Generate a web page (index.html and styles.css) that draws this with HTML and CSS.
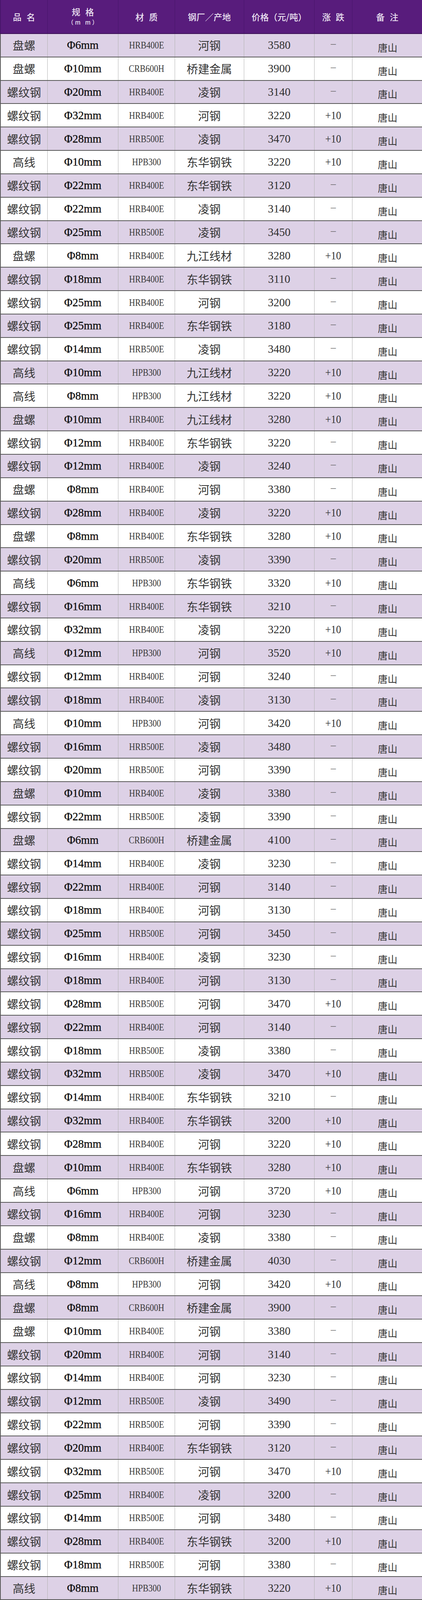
FILE: index.html
```html
<!DOCTYPE html>
<html lang="zh-CN">
<head>
<meta charset="utf-8">
<meta name="viewport" content="width=1080">
<title>钢材价格表</title>
<link rel="stylesheet" href="styles.css">
</head>
<body>
<div class="sheet">
  <div class="row head">
    <div class="cell"><span class="hl">品 名</span></div>
    <div class="cell stack"><span class="hl">规 格</span><span class="unit">（m m）</span></div>
    <div class="cell"><span class="hl">材 质</span></div>
    <div class="cell"><span class="hl tight">钢厂／产地</span></div>
    <div class="cell"><span class="hl tight">价格（元/吨）</span></div>
    <div class="cell"><span class="hl">涨 跌</span></div>
    <div class="cell"><span class="hl">备 注</span></div>
  </div>
  <div class="row"><div class="cell name">盘螺</div><div class="cell spec">Φ6mm</div><div class="cell grade"><span>HRB400E</span></div><div class="cell mill">河钢</div><div class="cell price">3580</div><div class="cell chg"><span class="flat">–</span></div><div class="cell note">唐山</div></div>
  <div class="row"><div class="cell name">盘螺</div><div class="cell spec">Φ10mm</div><div class="cell grade"><span>CRB600H</span></div><div class="cell mill">桥建金属</div><div class="cell price">3900</div><div class="cell chg"><span class="flat">–</span></div><div class="cell note">唐山</div></div>
  <div class="row"><div class="cell name">螺纹钢</div><div class="cell spec">Φ20mm</div><div class="cell grade"><span>HRB400E</span></div><div class="cell mill">凌钢</div><div class="cell price">3140</div><div class="cell chg"><span class="flat">–</span></div><div class="cell note">唐山</div></div>
  <div class="row"><div class="cell name">螺纹钢</div><div class="cell spec">Φ32mm</div><div class="cell grade"><span>HRB400E</span></div><div class="cell mill">河钢</div><div class="cell price">3220</div><div class="cell chg"><span class="up">+10</span></div><div class="cell note">唐山</div></div>
  <div class="row"><div class="cell name">螺纹钢</div><div class="cell spec">Φ28mm</div><div class="cell grade"><span>HRB500E</span></div><div class="cell mill">凌钢</div><div class="cell price">3470</div><div class="cell chg"><span class="up">+10</span></div><div class="cell note">唐山</div></div>
  <div class="row"><div class="cell name">高线</div><div class="cell spec">Φ10mm</div><div class="cell grade"><span>HPB300</span></div><div class="cell mill">东华钢铁</div><div class="cell price">3220</div><div class="cell chg"><span class="up">+10</span></div><div class="cell note">唐山</div></div>
  <div class="row"><div class="cell name">螺纹钢</div><div class="cell spec">Φ22mm</div><div class="cell grade"><span>HRB400E</span></div><div class="cell mill">东华钢铁</div><div class="cell price">3120</div><div class="cell chg"><span class="flat">–</span></div><div class="cell note">唐山</div></div>
  <div class="row"><div class="cell name">螺纹钢</div><div class="cell spec">Φ22mm</div><div class="cell grade"><span>HRB400E</span></div><div class="cell mill">凌钢</div><div class="cell price">3140</div><div class="cell chg"><span class="flat">–</span></div><div class="cell note">唐山</div></div>
  <div class="row"><div class="cell name">螺纹钢</div><div class="cell spec">Φ25mm</div><div class="cell grade"><span>HRB500E</span></div><div class="cell mill">凌钢</div><div class="cell price">3450</div><div class="cell chg"><span class="flat">–</span></div><div class="cell note">唐山</div></div>
  <div class="row"><div class="cell name">盘螺</div><div class="cell spec">Φ8mm</div><div class="cell grade"><span>HRB400E</span></div><div class="cell mill">九江线材</div><div class="cell price">3280</div><div class="cell chg"><span class="up">+10</span></div><div class="cell note">唐山</div></div>
  <div class="row"><div class="cell name">螺纹钢</div><div class="cell spec">Φ18mm</div><div class="cell grade"><span>HRB400E</span></div><div class="cell mill">东华钢铁</div><div class="cell price">3110</div><div class="cell chg"><span class="flat">–</span></div><div class="cell note">唐山</div></div>
  <div class="row"><div class="cell name">螺纹钢</div><div class="cell spec">Φ25mm</div><div class="cell grade"><span>HRB400E</span></div><div class="cell mill">河钢</div><div class="cell price">3200</div><div class="cell chg"><span class="flat">–</span></div><div class="cell note">唐山</div></div>
  <div class="row"><div class="cell name">螺纹钢</div><div class="cell spec">Φ25mm</div><div class="cell grade"><span>HRB400E</span></div><div class="cell mill">东华钢铁</div><div class="cell price">3180</div><div class="cell chg"><span class="flat">–</span></div><div class="cell note">唐山</div></div>
  <div class="row"><div class="cell name">螺纹钢</div><div class="cell spec">Φ14mm</div><div class="cell grade"><span>HRB500E</span></div><div class="cell mill">凌钢</div><div class="cell price">3480</div><div class="cell chg"><span class="flat">–</span></div><div class="cell note">唐山</div></div>
  <div class="row"><div class="cell name">高线</div><div class="cell spec">Φ10mm</div><div class="cell grade"><span>HPB300</span></div><div class="cell mill">九江线材</div><div class="cell price">3220</div><div class="cell chg"><span class="up">+10</span></div><div class="cell note">唐山</div></div>
  <div class="row"><div class="cell name">高线</div><div class="cell spec">Φ8mm</div><div class="cell grade"><span>HPB300</span></div><div class="cell mill">九江线材</div><div class="cell price">3220</div><div class="cell chg"><span class="up">+10</span></div><div class="cell note">唐山</div></div>
  <div class="row"><div class="cell name">盘螺</div><div class="cell spec">Φ10mm</div><div class="cell grade"><span>HRB400E</span></div><div class="cell mill">九江线材</div><div class="cell price">3280</div><div class="cell chg"><span class="up">+10</span></div><div class="cell note">唐山</div></div>
  <div class="row"><div class="cell name">螺纹钢</div><div class="cell spec">Φ12mm</div><div class="cell grade"><span>HRB400E</span></div><div class="cell mill">东华钢铁</div><div class="cell price">3220</div><div class="cell chg"><span class="flat">–</span></div><div class="cell note">唐山</div></div>
  <div class="row"><div class="cell name">螺纹钢</div><div class="cell spec">Φ12mm</div><div class="cell grade"><span>HRB400E</span></div><div class="cell mill">凌钢</div><div class="cell price">3240</div><div class="cell chg"><span class="flat">–</span></div><div class="cell note">唐山</div></div>
  <div class="row"><div class="cell name">盘螺</div><div class="cell spec">Φ8mm</div><div class="cell grade"><span>HRB400E</span></div><div class="cell mill">河钢</div><div class="cell price">3380</div><div class="cell chg"><span class="flat">–</span></div><div class="cell note">唐山</div></div>
  <div class="row"><div class="cell name">螺纹钢</div><div class="cell spec">Φ28mm</div><div class="cell grade"><span>HRB400E</span></div><div class="cell mill">凌钢</div><div class="cell price">3220</div><div class="cell chg"><span class="up">+10</span></div><div class="cell note">唐山</div></div>
  <div class="row"><div class="cell name">盘螺</div><div class="cell spec">Φ8mm</div><div class="cell grade"><span>HRB400E</span></div><div class="cell mill">东华钢铁</div><div class="cell price">3280</div><div class="cell chg"><span class="up">+10</span></div><div class="cell note">唐山</div></div>
  <div class="row"><div class="cell name">螺纹钢</div><div class="cell spec">Φ20mm</div><div class="cell grade"><span>HRB500E</span></div><div class="cell mill">凌钢</div><div class="cell price">3390</div><div class="cell chg"><span class="flat">–</span></div><div class="cell note">唐山</div></div>
  <div class="row"><div class="cell name">高线</div><div class="cell spec">Φ6mm</div><div class="cell grade"><span>HPB300</span></div><div class="cell mill">东华钢铁</div><div class="cell price">3320</div><div class="cell chg"><span class="up">+10</span></div><div class="cell note">唐山</div></div>
  <div class="row"><div class="cell name">螺纹钢</div><div class="cell spec">Φ16mm</div><div class="cell grade"><span>HRB400E</span></div><div class="cell mill">东华钢铁</div><div class="cell price">3210</div><div class="cell chg"><span class="flat">–</span></div><div class="cell note">唐山</div></div>
  <div class="row"><div class="cell name">螺纹钢</div><div class="cell spec">Φ32mm</div><div class="cell grade"><span>HRB400E</span></div><div class="cell mill">凌钢</div><div class="cell price">3220</div><div class="cell chg"><span class="up">+10</span></div><div class="cell note">唐山</div></div>
  <div class="row"><div class="cell name">高线</div><div class="cell spec">Φ12mm</div><div class="cell grade"><span>HPB300</span></div><div class="cell mill">河钢</div><div class="cell price">3520</div><div class="cell chg"><span class="up">+10</span></div><div class="cell note">唐山</div></div>
  <div class="row"><div class="cell name">螺纹钢</div><div class="cell spec">Φ12mm</div><div class="cell grade"><span>HRB400E</span></div><div class="cell mill">河钢</div><div class="cell price">3240</div><div class="cell chg"><span class="flat">–</span></div><div class="cell note">唐山</div></div>
  <div class="row"><div class="cell name">螺纹钢</div><div class="cell spec">Φ18mm</div><div class="cell grade"><span>HRB400E</span></div><div class="cell mill">凌钢</div><div class="cell price">3130</div><div class="cell chg"><span class="flat">–</span></div><div class="cell note">唐山</div></div>
  <div class="row"><div class="cell name">高线</div><div class="cell spec">Φ10mm</div><div class="cell grade"><span>HPB300</span></div><div class="cell mill">河钢</div><div class="cell price">3420</div><div class="cell chg"><span class="up">+10</span></div><div class="cell note">唐山</div></div>
  <div class="row"><div class="cell name">螺纹钢</div><div class="cell spec">Φ16mm</div><div class="cell grade"><span>HRB500E</span></div><div class="cell mill">凌钢</div><div class="cell price">3480</div><div class="cell chg"><span class="flat">–</span></div><div class="cell note">唐山</div></div>
  <div class="row"><div class="cell name">螺纹钢</div><div class="cell spec">Φ20mm</div><div class="cell grade"><span>HRB500E</span></div><div class="cell mill">河钢</div><div class="cell price">3390</div><div class="cell chg"><span class="flat">–</span></div><div class="cell note">唐山</div></div>
  <div class="row"><div class="cell name">盘螺</div><div class="cell spec">Φ10mm</div><div class="cell grade"><span>HRB400E</span></div><div class="cell mill">凌钢</div><div class="cell price">3380</div><div class="cell chg"><span class="flat">–</span></div><div class="cell note">唐山</div></div>
  <div class="row"><div class="cell name">螺纹钢</div><div class="cell spec">Φ22mm</div><div class="cell grade"><span>HRB500E</span></div><div class="cell mill">凌钢</div><div class="cell price">3390</div><div class="cell chg"><span class="flat">–</span></div><div class="cell note">唐山</div></div>
  <div class="row"><div class="cell name">盘螺</div><div class="cell spec">Φ6mm</div><div class="cell grade"><span>CRB600H</span></div><div class="cell mill">桥建金属</div><div class="cell price">4100</div><div class="cell chg"><span class="flat">–</span></div><div class="cell note">唐山</div></div>
  <div class="row"><div class="cell name">螺纹钢</div><div class="cell spec">Φ14mm</div><div class="cell grade"><span>HRB400E</span></div><div class="cell mill">凌钢</div><div class="cell price">3230</div><div class="cell chg"><span class="flat">–</span></div><div class="cell note">唐山</div></div>
  <div class="row"><div class="cell name">螺纹钢</div><div class="cell spec">Φ22mm</div><div class="cell grade"><span>HRB400E</span></div><div class="cell mill">河钢</div><div class="cell price">3140</div><div class="cell chg"><span class="flat">–</span></div><div class="cell note">唐山</div></div>
  <div class="row"><div class="cell name">螺纹钢</div><div class="cell spec">Φ18mm</div><div class="cell grade"><span>HRB400E</span></div><div class="cell mill">河钢</div><div class="cell price">3130</div><div class="cell chg"><span class="flat">–</span></div><div class="cell note">唐山</div></div>
  <div class="row"><div class="cell name">螺纹钢</div><div class="cell spec">Φ25mm</div><div class="cell grade"><span>HRB500E</span></div><div class="cell mill">河钢</div><div class="cell price">3450</div><div class="cell chg"><span class="flat">–</span></div><div class="cell note">唐山</div></div>
  <div class="row"><div class="cell name">螺纹钢</div><div class="cell spec">Φ16mm</div><div class="cell grade"><span>HRB400E</span></div><div class="cell mill">凌钢</div><div class="cell price">3230</div><div class="cell chg"><span class="flat">–</span></div><div class="cell note">唐山</div></div>
  <div class="row"><div class="cell name">螺纹钢</div><div class="cell spec">Φ18mm</div><div class="cell grade"><span>HRB400E</span></div><div class="cell mill">河钢</div><div class="cell price">3130</div><div class="cell chg"><span class="flat">–</span></div><div class="cell note">唐山</div></div>
  <div class="row"><div class="cell name">螺纹钢</div><div class="cell spec">Φ28mm</div><div class="cell grade"><span>HRB500E</span></div><div class="cell mill">河钢</div><div class="cell price">3470</div><div class="cell chg"><span class="up">+10</span></div><div class="cell note">唐山</div></div>
  <div class="row"><div class="cell name">螺纹钢</div><div class="cell spec">Φ22mm</div><div class="cell grade"><span>HRB400E</span></div><div class="cell mill">河钢</div><div class="cell price">3140</div><div class="cell chg"><span class="flat">–</span></div><div class="cell note">唐山</div></div>
  <div class="row"><div class="cell name">螺纹钢</div><div class="cell spec">Φ18mm</div><div class="cell grade"><span>HRB500E</span></div><div class="cell mill">凌钢</div><div class="cell price">3380</div><div class="cell chg"><span class="flat">–</span></div><div class="cell note">唐山</div></div>
  <div class="row"><div class="cell name">螺纹钢</div><div class="cell spec">Φ32mm</div><div class="cell grade"><span>HRB500E</span></div><div class="cell mill">凌钢</div><div class="cell price">3470</div><div class="cell chg"><span class="up">+10</span></div><div class="cell note">唐山</div></div>
  <div class="row"><div class="cell name">螺纹钢</div><div class="cell spec">Φ14mm</div><div class="cell grade"><span>HRB400E</span></div><div class="cell mill">东华钢铁</div><div class="cell price">3210</div><div class="cell chg"><span class="flat">–</span></div><div class="cell note">唐山</div></div>
  <div class="row"><div class="cell name">螺纹钢</div><div class="cell spec">Φ32mm</div><div class="cell grade"><span>HRB400E</span></div><div class="cell mill">东华钢铁</div><div class="cell price">3200</div><div class="cell chg"><span class="up">+10</span></div><div class="cell note">唐山</div></div>
  <div class="row"><div class="cell name">螺纹钢</div><div class="cell spec">Φ28mm</div><div class="cell grade"><span>HRB400E</span></div><div class="cell mill">河钢</div><div class="cell price">3220</div><div class="cell chg"><span class="up">+10</span></div><div class="cell note">唐山</div></div>
  <div class="row"><div class="cell name">盘螺</div><div class="cell spec">Φ10mm</div><div class="cell grade"><span>HRB400E</span></div><div class="cell mill">东华钢铁</div><div class="cell price">3280</div><div class="cell chg"><span class="up">+10</span></div><div class="cell note">唐山</div></div>
  <div class="row"><div class="cell name">高线</div><div class="cell spec">Φ6mm</div><div class="cell grade"><span>HPB300</span></div><div class="cell mill">河钢</div><div class="cell price">3720</div><div class="cell chg"><span class="up">+10</span></div><div class="cell note">唐山</div></div>
  <div class="row"><div class="cell name">螺纹钢</div><div class="cell spec">Φ16mm</div><div class="cell grade"><span>HRB400E</span></div><div class="cell mill">河钢</div><div class="cell price">3230</div><div class="cell chg"><span class="flat">–</span></div><div class="cell note">唐山</div></div>
  <div class="row"><div class="cell name">盘螺</div><div class="cell spec">Φ8mm</div><div class="cell grade"><span>HRB400E</span></div><div class="cell mill">凌钢</div><div class="cell price">3380</div><div class="cell chg"><span class="flat">–</span></div><div class="cell note">唐山</div></div>
  <div class="row"><div class="cell name">螺纹钢</div><div class="cell spec">Φ12mm</div><div class="cell grade"><span>CRB600H</span></div><div class="cell mill">桥建金属</div><div class="cell price">4030</div><div class="cell chg"><span class="flat">–</span></div><div class="cell note">唐山</div></div>
  <div class="row"><div class="cell name">高线</div><div class="cell spec">Φ8mm</div><div class="cell grade"><span>HPB300</span></div><div class="cell mill">河钢</div><div class="cell price">3420</div><div class="cell chg"><span class="up">+10</span></div><div class="cell note">唐山</div></div>
  <div class="row"><div class="cell name">盘螺</div><div class="cell spec">Φ8mm</div><div class="cell grade"><span>CRB600H</span></div><div class="cell mill">桥建金属</div><div class="cell price">3900</div><div class="cell chg"><span class="flat">–</span></div><div class="cell note">唐山</div></div>
  <div class="row"><div class="cell name">盘螺</div><div class="cell spec">Φ10mm</div><div class="cell grade"><span>HRB400E</span></div><div class="cell mill">河钢</div><div class="cell price">3380</div><div class="cell chg"><span class="flat">–</span></div><div class="cell note">唐山</div></div>
  <div class="row"><div class="cell name">螺纹钢</div><div class="cell spec">Φ20mm</div><div class="cell grade"><span>HRB400E</span></div><div class="cell mill">河钢</div><div class="cell price">3140</div><div class="cell chg"><span class="flat">–</span></div><div class="cell note">唐山</div></div>
  <div class="row"><div class="cell name">螺纹钢</div><div class="cell spec">Φ14mm</div><div class="cell grade"><span>HRB400E</span></div><div class="cell mill">河钢</div><div class="cell price">3230</div><div class="cell chg"><span class="flat">–</span></div><div class="cell note">唐山</div></div>
  <div class="row"><div class="cell name">螺纹钢</div><div class="cell spec">Φ12mm</div><div class="cell grade"><span>HRB500E</span></div><div class="cell mill">凌钢</div><div class="cell price">3490</div><div class="cell chg"><span class="flat">–</span></div><div class="cell note">唐山</div></div>
  <div class="row"><div class="cell name">螺纹钢</div><div class="cell spec">Φ22mm</div><div class="cell grade"><span>HRB500E</span></div><div class="cell mill">河钢</div><div class="cell price">3390</div><div class="cell chg"><span class="flat">–</span></div><div class="cell note">唐山</div></div>
  <div class="row"><div class="cell name">螺纹钢</div><div class="cell spec">Φ20mm</div><div class="cell grade"><span>HRB400E</span></div><div class="cell mill">东华钢铁</div><div class="cell price">3120</div><div class="cell chg"><span class="flat">–</span></div><div class="cell note">唐山</div></div>
  <div class="row"><div class="cell name">螺纹钢</div><div class="cell spec">Φ32mm</div><div class="cell grade"><span>HRB500E</span></div><div class="cell mill">河钢</div><div class="cell price">3470</div><div class="cell chg"><span class="up">+10</span></div><div class="cell note">唐山</div></div>
  <div class="row"><div class="cell name">螺纹钢</div><div class="cell spec">Φ25mm</div><div class="cell grade"><span>HRB400E</span></div><div class="cell mill">凌钢</div><div class="cell price">3200</div><div class="cell chg"><span class="flat">–</span></div><div class="cell note">唐山</div></div>
  <div class="row"><div class="cell name">螺纹钢</div><div class="cell spec">Φ14mm</div><div class="cell grade"><span>HRB500E</span></div><div class="cell mill">河钢</div><div class="cell price">3480</div><div class="cell chg"><span class="flat">–</span></div><div class="cell note">唐山</div></div>
  <div class="row"><div class="cell name">螺纹钢</div><div class="cell spec">Φ28mm</div><div class="cell grade"><span>HRB400E</span></div><div class="cell mill">东华钢铁</div><div class="cell price">3200</div><div class="cell chg"><span class="up">+10</span></div><div class="cell note">唐山</div></div>
  <div class="row"><div class="cell name">螺纹钢</div><div class="cell spec">Φ18mm</div><div class="cell grade"><span>HRB500E</span></div><div class="cell mill">河钢</div><div class="cell price">3380</div><div class="cell chg"><span class="flat">–</span></div><div class="cell note">唐山</div></div>
  <div class="row"><div class="cell name">高线</div><div class="cell spec">Φ8mm</div><div class="cell grade"><span>HPB300</span></div><div class="cell mill">东华钢铁</div><div class="cell price">3220</div><div class="cell chg"><span class="up">+10</span></div><div class="cell note">唐山</div></div>
</div>
</body>
</html>
```

FILE: styles.css
```css
html, body {
  margin: 0;
  padding: 0;
  background: #ffffff;
}

.sheet {
  width: 100%;
  height: 100vh;
  display: flex;
  flex-direction: column;
  overflow: hidden;
}

.row {
  flex: 1 1 0px;
  min-height: 0;
  box-sizing: border-box;
  display: grid;
  grid-template-columns: 11.2% 16.76% 13.42% 16.39% 16.67% 8.98% 1fr;
  grid-template-rows: 100%;
  border-bottom: 2px solid #585858;
  background: #ffffff;
  overflow: hidden;
}

.row:nth-child(even) {
  background: #ddd1e6;
}

.cell {
  display: flex;
  align-items: center;
  justify-content: center;
  border-left: 1px solid #b3b3b3;
  min-width: 0;
  min-height: 0;
  white-space: nowrap;
  line-height: 1;
}

.cell:first-child {
  border-left: 2px solid #5a5a5a;
}

/* header */
.row.head {
  flex: 0 0 2.12%;
  background: #581c7c;
  border-bottom: 2px solid #3c1256;
}

.head .cell {
  border-left: 1px solid #47156a;
  color: #ece3f2;
  font-family: "Noto Sans CJK SC", "Noto Sans", sans-serif;
  font-weight: 500;
}

.head .cell:first-child {
  border-left: 2px solid #47156a;
}

.head .hl {
  font-size: 22px;
  letter-spacing: 4px;
  margin-right: -4px;
}

.head .hl.tight {
  letter-spacing: 0;
  margin-right: 0;
}

.head .stack {
  flex-direction: column;
  gap: 9px;
  padding-bottom: 2px;
}

.head .unit {
  font-size: 15px;
  letter-spacing: 4px;
  margin-right: -4px;
}

/* body cells */
.name,
.mill {
  font-family: "Noto Sans CJK SC", sans-serif;
  font-size: 29px;
  color: #353535;
}

.note {
  font-family: "Noto Sans CJK SC", sans-serif;
  font-size: 25px;
  color: #353535;
  padding-top: 11px;
  padding-left: 2px;
}

.spec {
  font-family: "Liberation Serif", "Times New Roman", serif;
  font-size: 29px;
  color: #0d0d0d;
  -webkit-text-stroke: 0.35px #0d0d0d;
}

.grade {
  font-family: "Liberation Serif", "Times New Roman", serif;
  font-size: 25px;
  color: #3a3a3a;
}

.grade span {
  display: inline-block;
  transform: scaleX(0.86);
}

.price {
  font-family: "Liberation Serif", "Times New Roman", serif;
  font-size: 29px;
  color: #303030;
}

.chg {
  font-family: "Liberation Serif", "Times New Roman", serif;
  color: #333333;
}

.chg .up {
  display: inline-block;
  font-size: 29px;
  transform: scaleX(0.9);
}

.chg .flat {
  font-size: 26px;
  color: #555555;
  margin-bottom: 7px;
}
```
